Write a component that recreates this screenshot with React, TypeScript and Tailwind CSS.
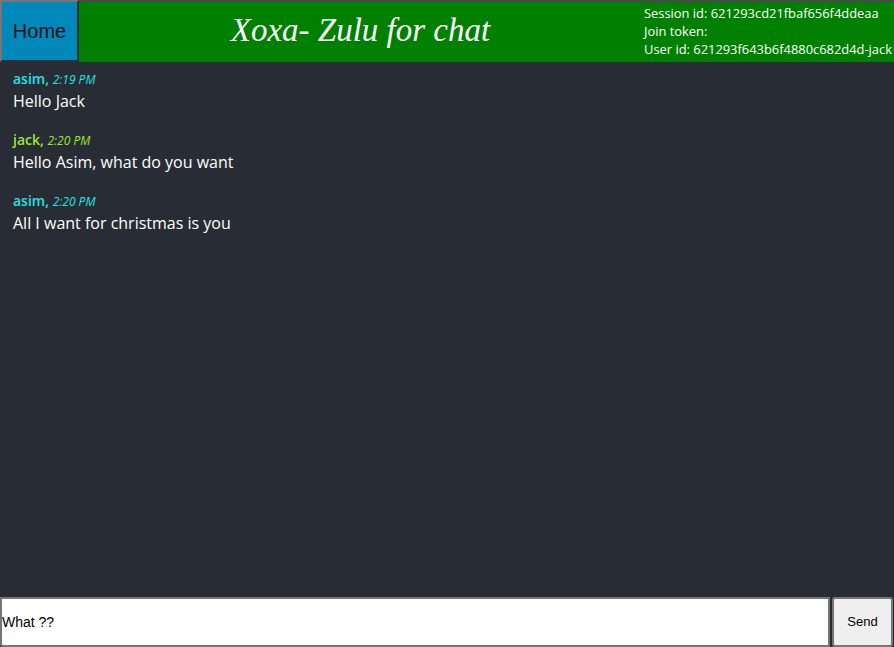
import React from "react";

const messages = [
  { user: "asim", time: "2:19 PM", text: "Hello Jack", color: "text-[#1ee6e6]" },
  { user: "jack", time: "2:20 PM", text: "Hello Asim, what do you want", color: "text-[#9ee62e]" },
  { user: "asim", time: "2:20 PM", text: "All I want for christmas is you", color: "text-[#1ee6e6]" },
];

const App: React.FC = () => {
  return (
    <div className="h-[647px] w-[894px] bg-[#282c34] flex flex-col font-['Open_Sans',sans-serif] overflow-hidden">
      <header className="flex h-[62px] bg-[#008000] border-t-2 border-[#4a4a4a]">
        <button className="w-[79px] bg-[#0088bb] border-2 border-t-[#767676] border-l-[#767676] border-r-[#2a2e36] border-b-[#2a2e36] text-[20px] text-[#111] font-['Liberation_Sans',sans-serif] -mt-[2px] h-[62px]">
          Home
        </button>
        <div className="flex-1 flex items-center justify-center">
          <h1 className="font-['Liberation_Serif',serif] italic text-[33px] text-white -mt-[2px] -ml-[2px]">
            Xoxa- Zulu for chat
          </h1>
        </div>
        <div className="text-white text-[12.9px] leading-[18px] pt-[2px] w-[250px] whitespace-nowrap">
          <div>Session id: 621293cd21fbaf656f4ddeaa</div>
          <div>Join token:</div>
          <div>User id: 621293f643b6f4880c682d4d-jack</div>
        </div>
      </header>

      <main className="flex-1 px-[13px] pt-[8px] flex flex-col gap-[18px]">
        {messages.map((m, i) => (
          <div key={i}>
            <div className={`${m.color} text-[14px] leading-[18px]`}>
              <span className="font-semibold">{m.user},</span>{" "}
              <span className="italic text-[12px]">{m.time}</span>
            </div>
            <div className="text-white text-[16px] leading-[24px]">{m.text}</div>
          </div>
        ))}
      </main>

      <footer className="flex h-[50px]">
        <input
          defaultValue="What ??"
          className="flex-1 bg-white border-2 border-[#767676] rounded-bl-[3px] px-0 text-[14px] text-black font-['Liberation_Sans',sans-serif] outline-none"
        />
        <button className="w-[61px] ml-[2px] mr-[1px] bg-[#efefef] border-2 border-[#767676] rounded-[3px] text-[13px] text-black font-['Liberation_Sans',sans-serif]">
          Send
        </button>
      </footer>
    </div>
  );
};

export default App;
